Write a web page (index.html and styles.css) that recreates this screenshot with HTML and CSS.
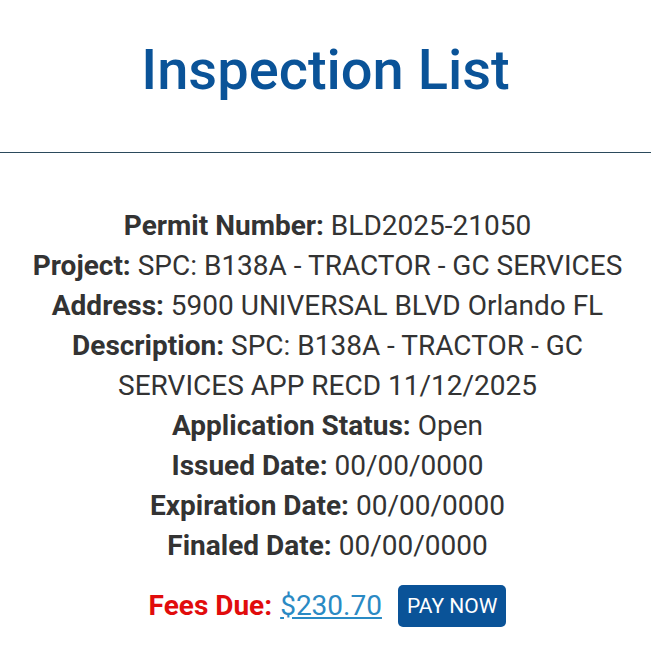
FILE: index.html
```html
<!DOCTYPE html>
<html lang="en">
<head>
	<meta charset="UTF-8">
	<title>Inspection List</title>
	<link rel="stylesheet" href="styles.css">
</head>
<body>
	<div class="header">
		<h1 class="title">Inspection List</h1>
	</div>
	<div class="permit">
		<div class="row"><b>Permit Number:</b> BLD2025-21050</div>
		<div class="row"><b>Project:</b> SPC: B138A - TRACTOR - GC SERVICES</div>
		<div class="row"><b>Address:</b> 5900 UNIVERSAL BLVD Orlando FL</div>
		<div class="row"><b>Description:</b> SPC: B138A - TRACTOR - GC SERVICES APP RECD 11/12/2025</div>
		<div class="row"><b>Application Status:</b> Open</div>
		<div class="row"><b>Issued Date:</b> 00/00/0000</div>
		<div class="row"><b>Expiration Date:</b> 00/00/0000</div>
		<div class="row"><b>Finaled Date:</b> 00/00/0000</div>
		<div class="fees">
			<b class="fees-label">Fees Due:</b>
			<a href="javascript:void(0);" class="amount">$230.70</a>
			<a href="javascript:void(0);" class="pay">PAY NOW</a>
		</div>
	</div>
</body>
</html>
```

FILE: styles.css
```css
body{
	margin:0;
	padding:0;
	background:#fff;
	font-family:Roboto, "Liberation Sans", sans-serif;
	color:#333;
}
.header{
	border-bottom:1px solid #2b4a5c;
	padding:30px 0 42px 0;
}
.title{
	margin:0;
	text-align:center;
	font-size:56px;
	font-weight:500;
	line-height:80px;
	color:#0a5398;
}
.permit{
	margin:0 auto;
	padding:53px 20px 0 24px;
	text-align:center;
	font-size:28px;
	line-height:40px;
}
.row b{
	font-weight:700;
}
.fees{
	display:flex;
	justify-content:center;
	align-items:center;
	gap:8px;
	margin-top:19px;
}
.fees-label{
	color:#e10c0c;
	font-weight:700;
}
.amount{
	color:#2a8ac4;
	text-decoration:underline;
	margin-right:8px;
}
.pay{
	display:block;
	background:#0a5398;
	color:#fff;
	text-decoration:none;
	font-size:21px;
	line-height:42px;
	padding:0 9px;
	border-radius:5px;
}
```
